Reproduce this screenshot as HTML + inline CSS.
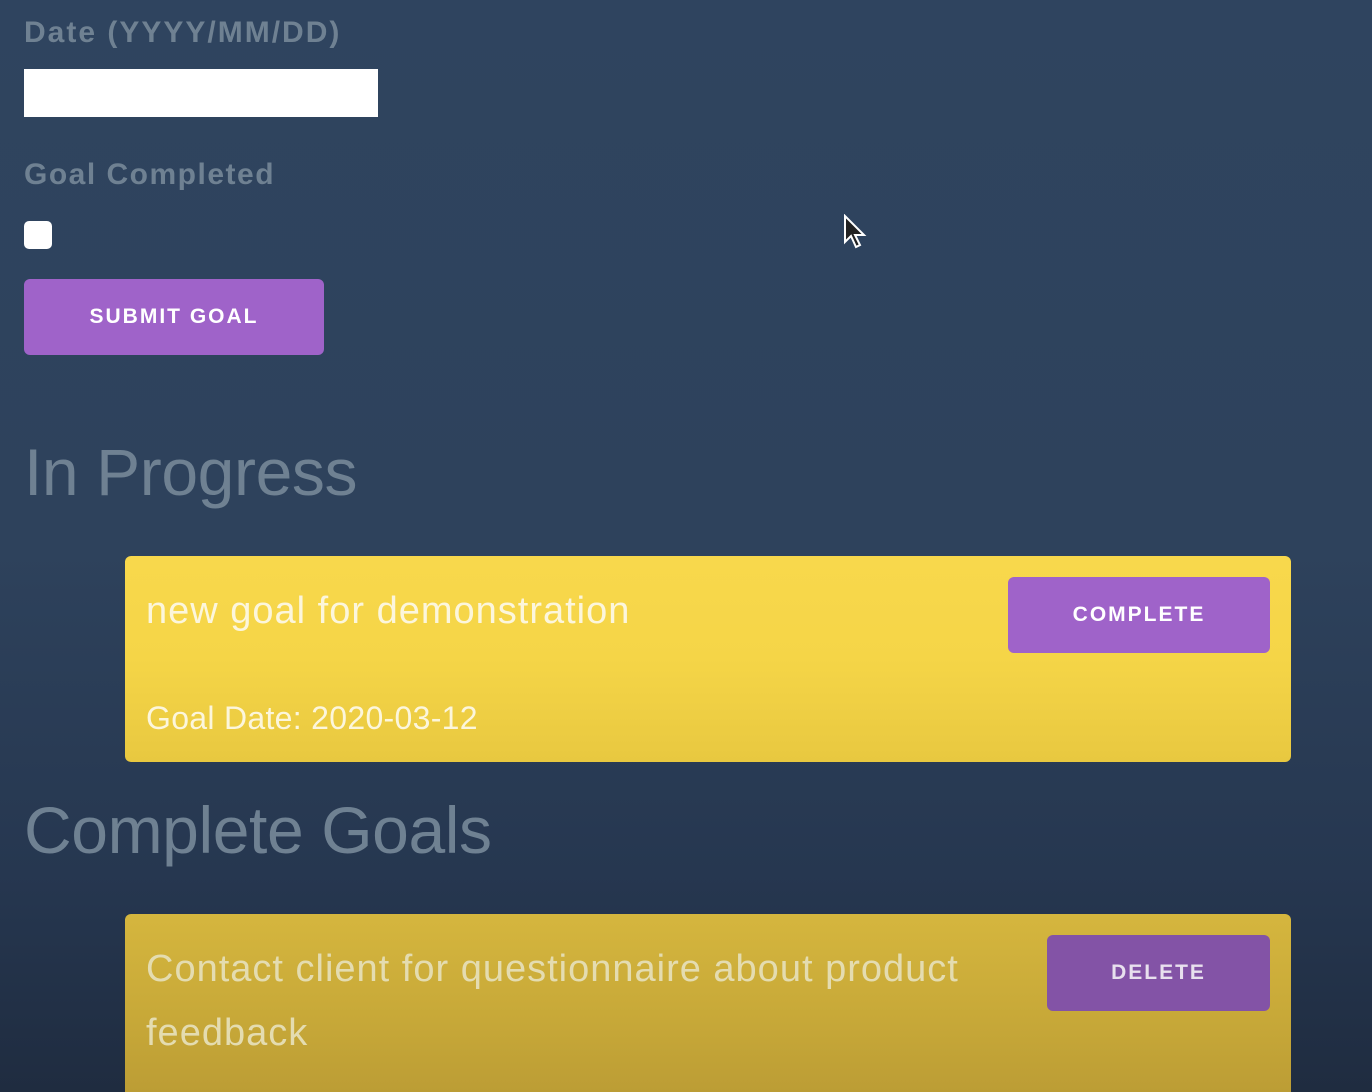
<!DOCTYPE html>
<html style="overflow:hidden;height:1092px"><head><style>
*{margin:0;padding:0;box-sizing:border-box}
body{width:1372px;height:1092px;overflow:hidden;position:relative;background:linear-gradient(#2f445f 0%,#2e425c 50%,#263750 80%,#1f2c40 100%);font-family:"Liberation Sans",sans-serif}
.a{position:absolute;white-space:nowrap}
.lbl{color:#6f8192;font-weight:bold;font-size:30px;letter-spacing:2px}
.h{color:#6f8192;font-size:66px;letter-spacing:-0.4px}
.btn{position:absolute;background:#9f63c9;border-radius:6px;color:#fff;font-weight:bold;font-size:21px;letter-spacing:2px;display:flex;align-items:center;justify-content:center}
.card{position:absolute;border-radius:6px}
.ct{color:#fcf6dc;font-size:38px;letter-spacing:1px}
</style></head><body>
<div class="a lbl" style="left:24px;top:16px">Date (YYYY/MM/DD)</div>
<div class="a" style="left:24px;top:69px;width:354px;height:48px;background:#fff"></div>
<div class="a lbl" style="left:24px;top:158px;letter-spacing:1.5px">Goal Completed</div>
<div class="a" style="left:24px;top:221px;width:28px;height:28px;background:#fff;border-radius:5px"></div>
<div class="btn" style="left:24px;top:279px;width:300px;height:76px">SUBMIT GOAL</div>
<svg class="a" style="left:843px;top:214px" width="26" height="38" viewBox="0 0 26 38"><path d="M2 2 L2 28 L8 22 L13 33 L17 31 L12 21 L21 21 Z" fill="#222" stroke="#fff" stroke-width="2"/></svg>
<div class="a h" style="left:24px;top:434px">In Progress</div>
<div class="card" style="left:125px;top:556px;width:1166px;height:206px;background:linear-gradient(#f8d84c 0%,#f5d547 50%,#e8c840 100%)"></div>
<div class="a ct" style="left:146px;top:590px">new goal for demonstration</div>
<div class="a ct" style="left:146px;top:700px;font-size:32px;letter-spacing:0.3px">Goal Date: 2020-03-12</div>
<div class="btn" style="left:1008px;top:577px;width:262px;height:76px">COMPLETE</div>
<div class="a h" style="left:24px;top:792px">Complete Goals</div>
<div class="card" style="left:125px;top:914px;width:1166px;height:178px;border-radius:6px 6px 0 0;background:linear-gradient(#d5b63e 0%,#c7a838 60%,#bc9d35 100%)"></div>
<div class="a ct" style="left:146px;top:948px;color:#e4dcb0">Contact client for questionnaire about product</div>
<div class="a ct" style="left:146px;top:1012px;color:#e4dcb0">feedback</div>
<div class="btn" style="left:1047px;top:935px;width:223px;height:76px;background:#8353a6;color:#e8e0ee">DELETE</div>
</body></html>
